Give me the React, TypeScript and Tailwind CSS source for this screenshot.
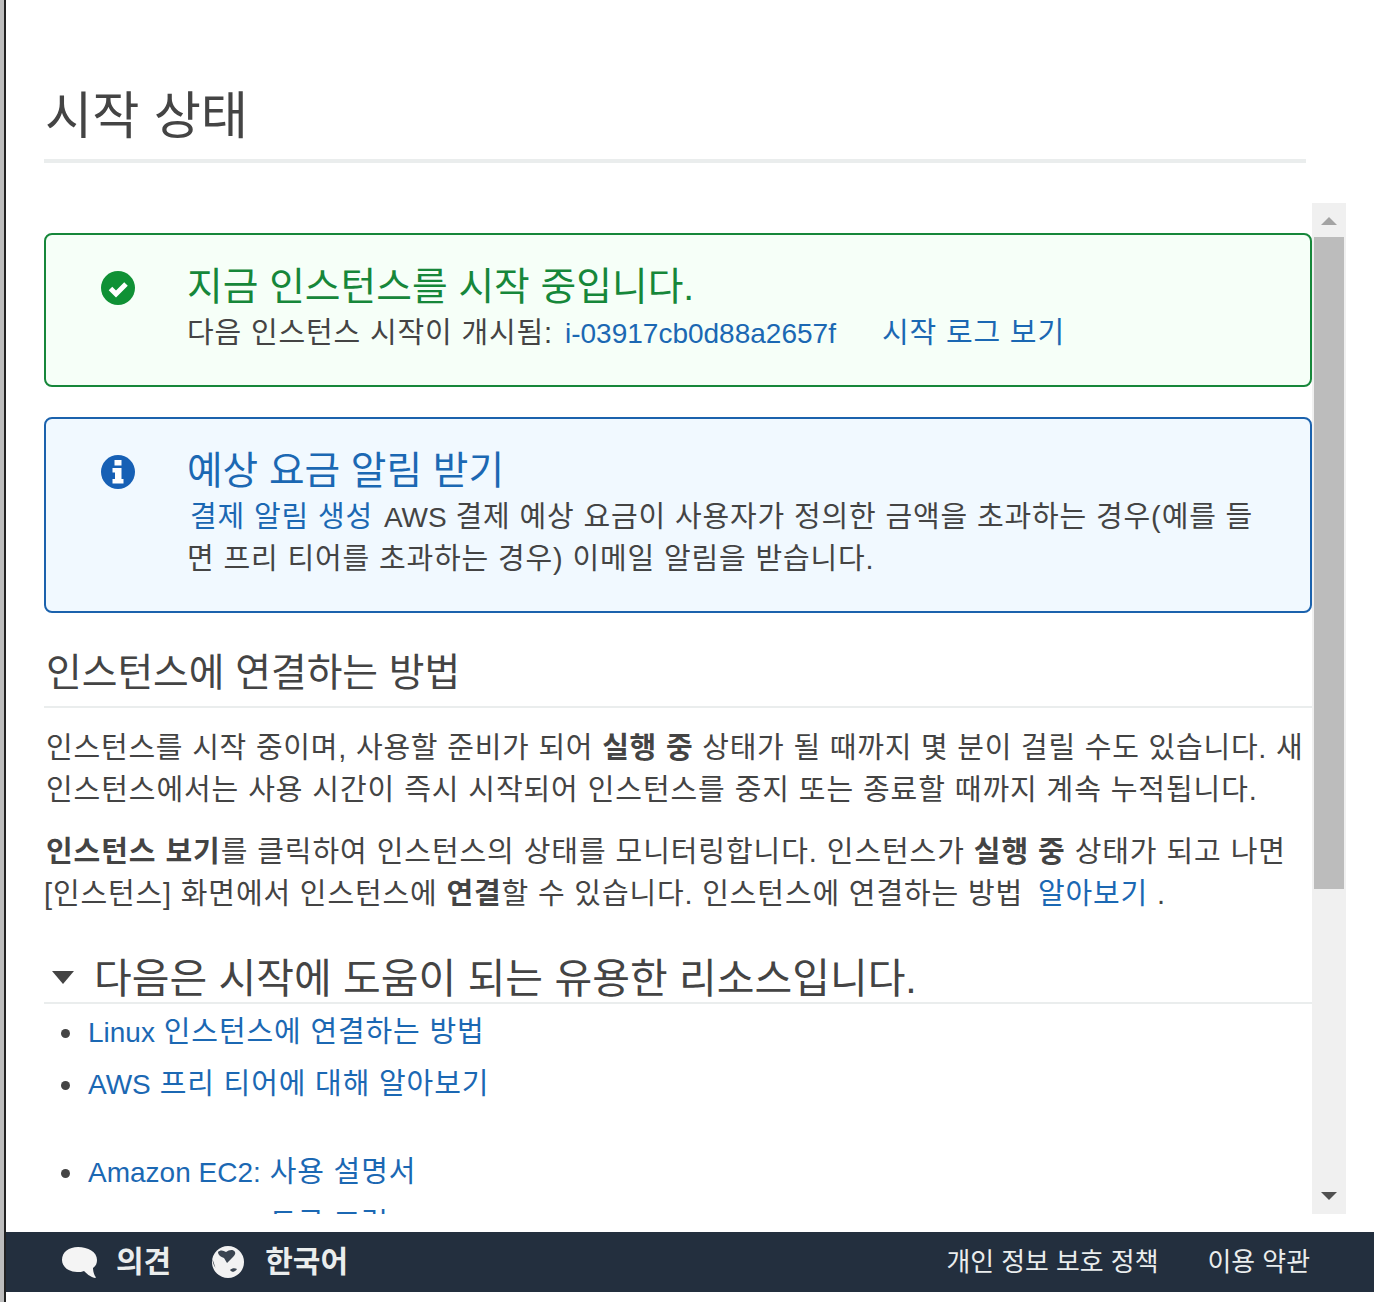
const font = '[font-family:"Liberation_Sans","Noto_Sans_CJK_KR",sans-serif]';

function Link({ children }: { children: React.ReactNode }) {
  return <a className="text-[#1b68b3]">{children}</a>;
}

// 라틴 문자는 자간 없이 28px
function En({ children }: { children: React.ReactNode }) {
  return <span className="text-[28px] tracking-normal">{children}</span>;
}

function Bullet({ children, className }: { children: React.ReactNode; className?: string }) {
  return (
    <div className={`flex items-center h-[44px] ${className ?? ''}`}>
      <span className="w-[9px] h-[9px] rounded-full bg-[#444] ml-[17px] mr-[18px]" />
      <Link>{children}</Link>
    </div>
  );
}

function CheckIcon() {
  return (
    <svg viewBox="0 0 34 34" className="w-[34px] h-[34px] ml-[55px] mr-[52px] mt-[10px] shrink-0">
      <circle cx="17" cy="17" r="17" fill="#0f9135" />
      <path d="M9.5 17.5l5.5 5.5 10-10" fill="none" stroke="#fff" strokeWidth="5" />
    </svg>
  );
}

function InfoIcon() {
  return (
    <svg viewBox="0 0 34 34" className="w-[34px] h-[34px] ml-[55px] mr-[52px] mt-[10px] shrink-0">
      <circle cx="17" cy="17" r="17" fill="#1660b5" />
      <path d="M13.5 5h7v5.5h-7zM11.5 13h9v11h2v4.5h-11V24h2.5v-6.5h-2.5z" fill="#fff" />
    </svg>
  );
}

function GlobeIcon() {
  return (
    <svg viewBox="0 0 32 32" className="w-[32px] h-[32px] ml-[41px] shrink-0">
      <circle cx="16" cy="16" r="16" fill="#f2f2f2" />
      <path d="M6 6c2-2 5-2 8 0 3-2 7-3 9 0 1 2-1 4-3 6l-5 5-3-5C9 11 6 9 6 6z" fill="#3a4450" />
      <path d="M18 24c2-2 5-2 7-1-2 3-5 4-7 1zM0.5 13c1 3 2 6 3 9-2-3-3-6-3-9z" fill="#3a4450" />
    </svg>
  );
}

export default function App() {
  return (
    <div className={`${font} w-[1374px] h-[1302px] flex bg-white text-[#444] text-[29px] tracking-[0.85px] overflow-hidden`}>
      {/* 왼쪽 창 테두리 */}
      <div className="w-[4px] bg-[#bdbdbd]" />
      <div className="w-[2px] bg-[#222]" />

      <div className="w-[1368px] flex flex-col">
        <div className="ml-[38px] w-[1262px] h-[163px] pt-[87px] border-b-4 border-[#eaeded]">
          <h1 className="ml-[1px] text-[51.3px] tracking-normal leading-[60px]">시작 상태</h1>
        </div>

        <div className="mt-[40px] ml-[38px] h-[1011px] flex items-stretch">
          {/* 스크롤 영역 */}
          <div className="w-[1268px] pt-[30px] overflow-hidden whitespace-nowrap">
            <div className="h-[154px] flex rounded-[8px] border-2 border-[#16873a] bg-[#f6fff8] pt-[26px]">
              <CheckIcon />
              <div>
                <div className="text-[38.8px] tracking-normal leading-[52px] text-[#16873a]">지금 인스턴스를 시작 중입니다.</div>
                <div className="leading-[40px] flex">
                  <span>다음 인스턴스 시작이 개시됨:</span>
                  <span className="ml-[12px]"><Link><En>i-03917cb0d88a2657f</En></Link></span>
                  <span className="ml-[46px]"><Link>시작 로그 보기</Link></span>
                </div>
              </div>
            </div>

            <div className="mt-[30px] h-[196px] flex rounded-[8px] border-2 border-[#1b62ad] bg-[#f1f9ff] pt-[26px]">
              <InfoIcon />
              <div>
                <div className="text-[38.7px] tracking-normal leading-[52px] text-[#1b68b3]">예상 요금 알림 받기</div>
                <div className="leading-[42px] -mt-[1px]">
                  <span className="ml-[3px]"><Link>결제 알림 생성</Link></span> <span className="ml-[2px]"><En>AWS</En></span> 결제 예상 요금이 사용자가 정의한 금액을 초과하는 경우(예를 들
                </div>
                <div className="leading-[42px] -mt-[1px]">면 프리 티어를 초과하는 경우) 이메일 알림을 받습니다.</div>
              </div>
            </div>

            <h2 className="mt-[33px] pl-[2px] h-[62px] text-[38.8px] tracking-normal leading-[54px] border-b-2 border-[#eaeded]">인스턴스에 연결하는 방법</h2>

            <div className="mt-[19px] pl-[2px] leading-[42px]">
              <div className="tracking-[0.78px]">인스턴스를 시작 중이며, 사용할 준비가 되어 <b>실행 중</b> 상태가 될 때까지 몇 분이 걸릴 수도 있습니다. 새</div>
              <div className="tracking-[0.92px]">인스턴스에서는 사용 시간이 즉시 시작되어 인스턴스를 중지 또는 종료할 때까지 계속 누적됩니다.</div>
            </div>
            <div className="mt-[20px] leading-[42px]">
              <div className="pl-[2px] tracking-[0.93px]"><b>인스턴스 보기</b>를 클릭하여 인스턴스의 상태를 모니터링합니다. 인스턴스가 <b>실행 중</b> 상태가 되고 나면</div>
              <div>[인스턴스] 화면에서 인스턴스에 <b>연결</b>할 수 있습니다. 인스턴스에 연결하는 방법 <span className="ml-[6px]"><Link>알아보기</Link></span> .</div>
            </div>

            <div className="mt-[35px] h-[54px] flex items-center border-b-2 border-[#eaeded] text-[41px] tracking-normal">
              <svg viewBox="0 0 22 13" className="w-[22px] h-[13px] ml-[8px] mr-[20px] mt-[2px]">
                <path d="M0 0h22L11 13z" fill="#444" />
              </svg>
              <span className="translate-y-[4px]">다음은 시작에 도움이 되는 유용한 리소스입니다.</span>
            </div>
            <div className="mt-[7px]">
              <Bullet><En>Linux</En> 인스턴스에 연결하는 방법</Bullet>
              <Bullet className="mt-[8px]"><En>AWS</En> 프리 티어에 대해 알아보기</Bullet>
              <Bullet className="mt-[44px]"><En>Amazon EC2:</En> 사용 설명서</Bullet>
              <Bullet className="mt-[8px]"><En>Amazon EC2:</En> 토론 포럼</Bullet>
            </div>
          </div>

          {/* 스크롤바 */}
          <div className="w-[34px] bg-[#f0f0f0] flex flex-col items-center">
            <svg viewBox="0 0 16 8" className="w-[16px] h-[8px] mt-[14px] shrink-0">
              <path d="M0 8h16L8 0z" fill="#a3a3a3" />
            </svg>
            <div className="w-[30px] h-[652px] mt-[12px] bg-[#bcbcbc]" />
            <svg viewBox="0 0 16 8" className="w-[16px] h-[8px] mt-auto mb-[14px] shrink-0">
              <path d="M0 0h16L8 8z" fill="#505050" />
            </svg>
          </div>
        </div>

        {/* 푸터 */}
        <div className="mt-[18px] h-[60px] bg-[#232f3e] text-[#eaeded] flex items-center tracking-normal">
          <svg viewBox="0 0 36 33" className="w-[36px] h-[33px] ml-[55px] shrink-0">
            <path d="M17 1C8 1 1 6 1 14c0 7 7 12 15 12 3 0 5 0 7-1 2 2 6 6 11 7 1 0 1-1 0-2-1-2-2-5-2-8 3-2 4-5 4-8C36 6 27 1 17 1z" fill="#f4f4f4" />
          </svg>
          <b className="ml-[19px] text-[30px] -translate-y-[1px]">의견</b>
          <GlobeIcon />
          <b className="ml-[21px] text-[30px] -translate-y-[1px]">한국어</b>
          <span className="ml-auto text-[25.9px]">개인 정보 보호 정책</span>
          <span className="ml-[49px] mr-[64px] text-[25.9px]">이용 약관</span>
        </div>
      </div>
    </div>
  );
}
